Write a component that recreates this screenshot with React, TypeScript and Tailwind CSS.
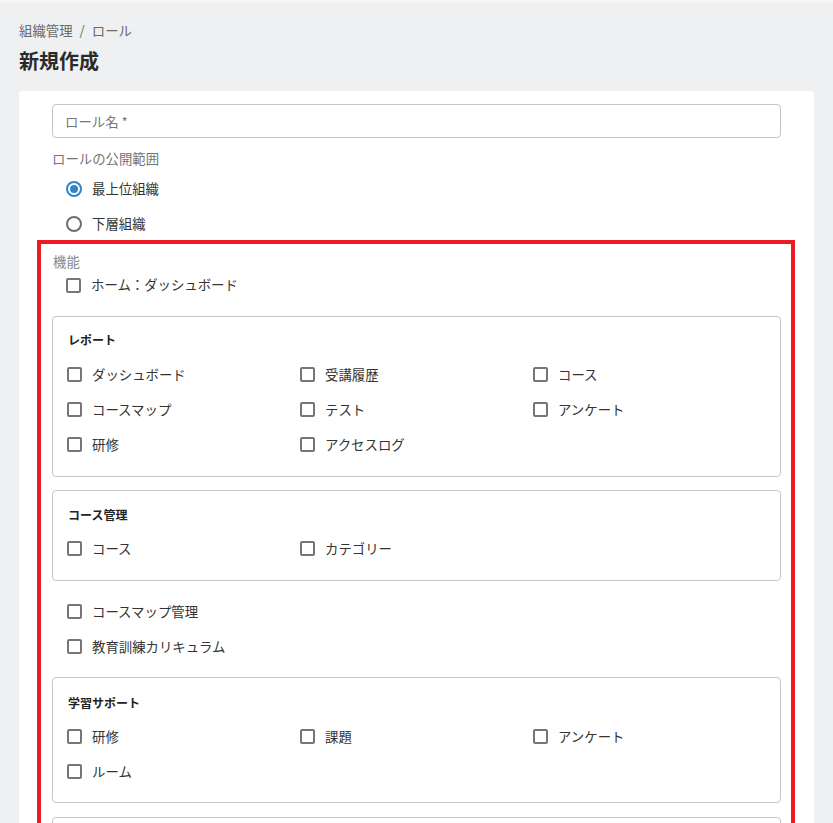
import React from "react";

const font = { fontFamily: '"Noto Sans CJK JP", "Noto Sans", sans-serif' };

function Checkbox({ label }: { label: string }) {
  return (
    <div className="flex items-center h-[35px]">
      <span className="w-[15px] h-[15px] border-2 border-[#767676] rounded-[2px] bg-white shrink-0" />
      <span className="ml-[10px] text-[13.4px] text-[#333] leading-none">{label}</span>
    </div>
  );
}

function Radio({ label, checked }: { label: string; checked?: boolean }) {
  return (
    <div className="flex items-center h-[35px] pl-[14px]">
      <span
        className={
          checked
            ? "w-[16px] h-[16px] rounded-full border-2 border-[#2f86c9] flex items-center justify-center shrink-0"
            : "w-[16px] h-[16px] rounded-full border-2 border-[#6f6f6f] shrink-0"
        }
      >
        {checked ? <span className="w-[8px] h-[8px] rounded-full bg-[#2f86c9]" /> : null}
      </span>
      <span className="ml-[10px] text-[13.4px] text-[#333] leading-none">{label}</span>
    </div>
  );
}

function Group({
  title,
  items,
  pt = "pt-[13px]",
  pb = "pb-[14px]",
  mt = "mt-[7px]",
}: {
  title: string;
  items: string[];
  pt?: string;
  pb?: string;
  mt?: string;
}) {
  return (
    <div className={`border border-[#c8c8c8] rounded-[4px] px-[14px] ${pt} ${pb}`}>
      <div className="text-[12px] font-bold text-[#222] leading-[20px] pl-[1px]">{title}</div>
      <div className={`grid grid-cols-3 ${mt}`}>
        {items.map((it) => (
          <Checkbox key={it} label={it} />
        ))}
      </div>
    </div>
  );
}

export default function App() {
  return (
    <div className="min-h-screen bg-[#eff0f2] border-t-[3px] border-[#f6f6f7] overflow-hidden" style={font}>
      <div className="px-[19px] pt-[17px]">
        <div className="text-[13.4px] leading-[20px] text-[#6b6b6b]">
          組織管理 <span className="mx-[4px]">/</span> ロール
        </div>
        <div className="text-[20px] font-bold leading-[28px] text-[#2a2a2a] mt-[7px]">新規作成</div>
        <div className="bg-white rounded-[4px] mt-[16px] px-[33px] pt-[13px] pb-[40px]">
          <div className="h-[34px] border border-[#c4c4c4] rounded-[4px] flex items-center px-[12px] text-[13.4px] text-[#777]">
            ロール名 *
          </div>
          <div className="text-[13.4px] leading-[20px] text-[#757575] mt-[10px]">ロールの公開範囲</div>
          <div className="mt-[3px]">
            <Radio label="最上位組織" checked />
            <Radio label="下層組織" />
          </div>
          <div className="ml-[-15px] mr-[-14px] border-[4px] border-[#ec1c24] pl-[11px] pr-[10px] pt-[9px] pb-[40px] mt-[-1px]">
            <div className="text-[13.4px] leading-[16px] text-[#8a8a8a] pl-[1px]">機能</div>
            <div className="pl-[14px] h-[32px] flex items-center">
              <span className="w-[15px] h-[15px] border-2 border-[#767676] rounded-[2px] bg-white shrink-0" />
              <span className="ml-[10px] text-[13.4px] text-[#333] leading-none">ホーム：ダッシュボード</span>
            </div>
            <div className="mt-[15px]">
              <Group
                title="レポート"
                items={["ダッシュボード", "受講履歴", "コース", "コースマップ", "テスト", "アンケート", "研修", "アクセスログ"]}
              />
            </div>
            <div className="mt-[13px]">
              <Group title="コース管理" items={["コース", "カテゴリー"]} pt="pt-[14px]" mt="mt-[6px]" />
            </div>
            <div className="mt-[13px] pl-[15px]">
              <Checkbox label="コースマップ管理" />
              <Checkbox label="教育訓練カリキュラム" />
            </div>
            <div className="mt-[13px]">
              <Group
                title="学習サポート"
                items={["研修", "課題", "アンケート", "ルーム"]}
                pt="pt-[15px]"
                mt="mt-[6px]"
                pb="pb-[13px]"
              />
            </div>
            <div className="mt-[14px] border border-[#c8c8c8] rounded-[4px] h-[120px]" />
          </div>
        </div>
      </div>
    </div>
  );
}
